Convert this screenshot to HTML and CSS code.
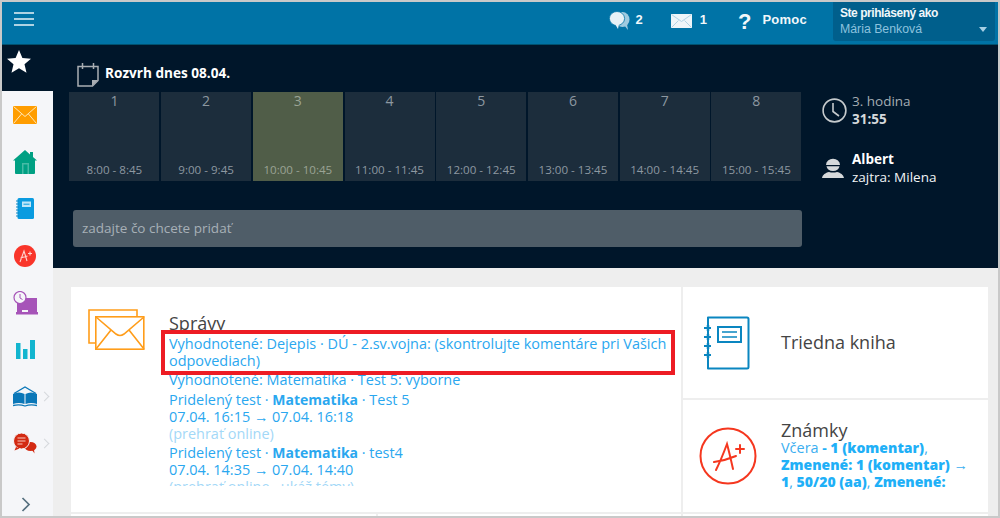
FILE: index.html
```html
<!DOCTYPE html>
<html lang="sk">
<head>
<meta charset="utf-8">
<title>Rozvrh</title>
<link rel="stylesheet" href="styles.css">
</head>
<body>
<div class="frame">
  <header class="topbar">
    <svg class="burger" width="20" height="14" viewBox="0 0 20 14"><path d="M0 1h20M0 7h20M0 13h20" stroke="#e8f3f8" stroke-width="1.6"/></svg>
    <div class="top-items">
      <svg class="ti-chat" width="21" height="20" viewBox="0 0 21 20"><ellipse cx="13.5" cy="8.5" rx="7" ry="7.5" fill="#9fcbe0"/><path d="M15 14l4 5-1-6z" fill="#9fcbe0"/><ellipse cx="8" cy="7.5" rx="7.6" ry="7" fill="#e6f1f6" stroke="#0073a6" stroke-width=".8"/><path d="M6 13l3 5 1-5z" fill="#e6f1f6"/></svg>
      <b class="ti-count c1">2</b>
      <svg class="ti-mail" width="21" height="14" viewBox="0 0 21 14"><rect width="21" height="14" fill="#eef5f9"/><path d="M.5.5l10 7 10-7M.5 13.5l7-7M20.5 13.5l-7-7" stroke="#a8cfe2" fill="none" stroke-width=".9"/></svg>
      <b class="ti-count c2">1</b>
      <span class="ti-help">?</span>
      <b class="ti-pomoc">Pomoc</b>
      <div class="user">
        <b class="user-label">Ste prihlásený ako</b>
        <span class="user-name">Mária Benková</span>
        <i class="caret"></i>
      </div>
    </div>
  </header>
  <div class="layout">
    <aside class="side">
      <div class="side-top">
        <svg width="24" height="23" viewBox="0 0 24 23"><path d="M12 0l3.4 8 8.6.7-6.5 5.6 2 8.4L12 18.2 4.500 22.700l2-8.400L0 8.700 8.600 8z" fill="#fff"/></svg>
      </div>
      <nav class="side-nav">
        <div class="nav-item"><svg width="24" height="18" viewBox="0 0 24 18"><rect width="24" height="18" fill="#ff9d00"/><path d="M.5.500l11.500 10L23.500.500M.5 17.500l8-9.500M23.500 17.500l-8-9.500" stroke="#ffe7b8" stroke-width="1" fill="none"/></svg></div>
        <div class="nav-item"><svg width="24" height="24" viewBox="0 0 24 24"><path d="M12 0L0 10.500h2V23a1 1 0 0 0 1 1h18a1 1 0 0 0 1-1V10.500h2L20 7V2h-3v2.500z" fill="#00a083"/><rect x="9" y="13" width="7" height="11" fill="#47bba6"/><rect x="10.500" y="14.500" width="4" height="9.500" fill="#00a083"/></svg></div>
        <div class="nav-item"><svg width="18" height="21" viewBox="0 0 18 21"><rect x="1.500" width="16.500" height="21" rx="1.500" fill="#0a9be0"/><path d="M0 3h3M0 6h3M0 9h3M0 12h3M0 15h3M0 18h3" stroke="#0a86c4" stroke-width="1"/><rect x="6" y="3.500" width="9" height="5.500" fill="#bfe6f8"/><path d="M7.500 6.200h6" stroke="#0a9be0"/></svg></div>
        <div class="nav-item"><svg width="22" height="22" viewBox="0 0 22 22"><circle cx="11" cy="11" r="11" fill="#f9352a"/><path d="M6 17L10 6l3 10M6.500 13l7-2M14 8.500h4M16 6.500v4" stroke="#ffd5d0" stroke-width="1.100" fill="none"/></svg></div>
        <div class="nav-item"><svg width="25" height="24" viewBox="0 0 25 24"><rect x="4" y="7" width="20" height="14" fill="#a654b8"/><path d="M3 21h22v2.500H3z" fill="#a654b8"/><rect x="9" y="19" width="6" height="2" fill="#f5f6f9"/><circle cx="7" cy="6.500" r="6" fill="#f5f6f9" stroke="#a654b8" stroke-width="1.200"/><path d="M7 3v4l2.500 1.500" stroke="#a654b8" fill="none"/></svg></div>
        <div class="nav-item"><svg width="19" height="19" viewBox="0 0 19 19"><path d="M0 3h4.500v16H0zM7 9h4.500v10H7zM14 0h5v19h-5z" fill="#12b5cf"/></svg></div>
        <div class="nav-item has-more"><svg width="24" height="21" viewBox="0 0 24 21"><path d="M1 7.500L12 1l11 6.500" stroke="#0a77b8" stroke-width="1.300" fill="none"/><path d="M0 8c4-2 8-2 11.500 0v10C8 16.500 4 16.500 0 18zM24 8c-4-2-8-2-11.500 0v10c3.500-1.500 7.500-1.500 11.500 0z" fill="#0a77b8"/><path d="M0 19.500c4-1 8-1 12 .5 4-1.500 8-1.500 12-.5" stroke="#0a77b8" stroke-width="1.300" fill="none"/></svg><i class="more"></i></div>
        <div class="nav-item has-more"><svg width="24" height="21" viewBox="0 0 24 21"><ellipse cx="17.500" cy="13.500" rx="6" ry="4.500" fill="#d32a12"/><path d="M19 17l2.500 3.500-.5-4z" fill="#d32a12"/><circle cx="8.500" cy="8" r="8" fill="#d32a12" stroke="#f5f6f9"/><path d="M3 14l-1.500 3.500 5-2z" fill="#d32a12"/><path d="M4.500 5h8M4.500 8h8M4.500 11h5" stroke="#f9c9c0" stroke-width="1.200"/></svg><i class="more"></i></div>
        <svg class="side-chevron" width="10" height="15" viewBox="0 0 10 15"><path d="M1.500 1l6.500 6.500L1.500 14" stroke="#56707f" stroke-width="1.700" fill="none"/></svg>
      </nav>
    </aside>
    <main class="main">
      <section class="hero">
        <div class="hero-left">
          <div class="today">
            <svg width="22" height="25" viewBox="0 0 22 25"><path d="M1 4.500h20v14l-5.500 5.500H1z" fill="none" stroke="#a9aeb3" stroke-width="1.500"/><path d="M5.500 1v6M16.500 1v6" stroke="#a9aeb3" stroke-width="1.500"/><path d="M15 24v-6h6z" fill="#a9aeb3"/></svg>
            <b>Rozvrh dnes 08.04.</b>
          </div>
          <div class="lessons">
            <div class="lesson"><span class="num">1</span><span class="time">8:00 - 8:45</span></div>
            <div class="lesson"><span class="num">2</span><span class="time">9:00 - 9:45</span></div>
            <div class="lesson current"><span class="num">3</span><span class="time">10:00 - 10:45</span></div>
            <div class="lesson"><span class="num">4</span><span class="time">11:00 - 11:45</span></div>
            <div class="lesson"><span class="num">5</span><span class="time">12:00 - 12:45</span></div>
            <div class="lesson"><span class="num">6</span><span class="time">13:00 - 13:45</span></div>
            <div class="lesson"><span class="num">7</span><span class="time">14:00 - 14:45</span></div>
            <div class="lesson"><span class="num">8</span><span class="time">15:00 - 15:45</span></div>
          </div>
          <div class="add-input">zadajte čo chcete pridať</div>
        </div>
        <div class="hero-right">
          <div class="status">
            <svg width="25" height="25" viewBox="0 0 25 25"><circle cx="12.500" cy="12.500" r="11.400" fill="none" stroke="#c5cacd" stroke-width="1.600"/><path d="M11 5v8.500l6 4.500" fill="none" stroke="#c5cacd" stroke-width="1.600"/></svg>
            <div class="status-text clock"><span>3. hodina</span><b>31:55</b></div>
          </div>
          <div class="status nameday">
            <svg width="22" height="21" viewBox="0 0 22 24" preserveAspectRatio="none"><path d="M4 9a7 7 0 0 1 14 0z" fill="#d6d9db"/><path d="M4.500 10.500h13C17 14 14.500 16 11 16s-6-2-6.500-5.500z" fill="#d6d9db"/><path d="M0 24c.5-4 3.500-6 7-7 2.500 1 5.500 1 8 0 3.500 1 6.500 3 7 7z" fill="#d6d9db"/></svg>
            <div class="status-text name"><b>Albert</b><span>zajtra: Milena</span></div>
          </div>
        </div>
      </section>
      <section class="dash">
        <article class="card card-msg">
          <svg class="card-icon" width="57" height="41" viewBox="0 0 57 41"><path d="M7 34H1V1h48v6" fill="none" stroke="#ff9d1a" stroke-width="1.600"/><rect x="7.800" y="7.800" width="48" height="32.400" fill="#fff" stroke="#ff9d1a" stroke-width="1.600"/><path d="M8 8l20 17q4 3 8 0L56 8M8 40l15-19M56 40L41 21" fill="none" stroke="#ff9d1a" stroke-width="1.600"/></svg>
          <div class="card-body">
            <h2>Správy</h2>
            <div class="feed">
              <p>Vyhodnotené: Dejepis · DÚ - 2.sv.vojna: (skontrolujte komentáre pri Vašich odpovediach)</p>
              <p>Vyhodnotené: Matematika · Test 5: vyborne</p>
              <p>Pridelený test · <b>Matematika</b> · Test 5<br>07.04. 16:15 → 07.04. 16:18<br><span class="soft">(prehrať online)</span></p>
              <p>Pridelený test · <b>Matematika</b> · test4<br>07.04. 14:35 → 07.04. 14:40<br><span class="soft">(prehrať online , ukáž témy)</span></p>
            </div>
          </div>
          <div class="marker"></div>
        </article>
        <article class="card card-book">
          <svg width="46" height="54" viewBox="0 0 46 54"><path d="M4 1.500h39a1.500 1.500 0 0 1 1.500 1.500v48a1.500 1.500 0 0 1-1.500 1.500H4z" fill="none" stroke="#0a86c0" stroke-width="2" stroke-linejoin="round"/><path d="M4 1.500v51" stroke="#0a86c0" stroke-width="2"/><path d="M0 12h7M0 21h7M0 30h7M0 39h7" stroke="#0a86c0" stroke-width="2"/><path d="M4 9v6M4 18v6M4 27v6M4 36v6" stroke="#0a86c0" stroke-width="2.500"/><rect x="14" y="11" width="23" height="15" fill="none" stroke="#0a86c0" stroke-width="2"/><path d="M18 16h15M18 21h15" stroke="#0a86c0" stroke-width="1.600"/></svg>
          <h2>Triedna kniha</h2>
        </article>
        <article class="card card-grade">
          <svg width="58" height="58" viewBox="0 0 58 58"><circle cx="29" cy="29" r="27.500" fill="none" stroke="#f5371f" stroke-width="2"/><path d="M17 43c4-8 8-18 11-26 2 7 4 16 6 25M15 35c7-1 15-3 22-6M37 22h8M41 18v8" fill="none" stroke="#f5371f" stroke-width="2" stroke-linecap="round"/></svg>
          <div class="card-body">
            <h2>Známky</h2>
            <div class="grades"><span class="thin">Včera</span> - <b>1 (komentar)</b><span class="thin">,</span> <b>Zmenené: 1 (komentar)</b> <span class="thin">→</span> <b>1</b><span class="thin">,</span> <b>50/20 (aa)</b><span class="thin">,</span> <b>Zmenené:</b></div>
          </div>
        </article>
        <div class="rest-row">
          <div class="card"></div>
          <div class="card"></div>
        </div>
        <div class="card card-rest"></div>
      </section>
    </main>
  </div>
</div>
</body>
</html>
```
FILE: styles.css
```css
* { box-sizing: border-box; }
html, body { margin: 0; padding: 0; }
body { width: 1000px; height: 518px; overflow: hidden; font-family: "Open Sans", sans-serif; }
h2, p { margin: 0; font-weight: 400; }
svg { flex: none; }

.frame { width: 1000px; height: 518px; border: 2px solid #c9c9c9; display: flex; flex-direction: column; overflow: hidden; background: #eee; }

.topbar { height: 43px; flex: none; background: #0073a6; display: flex; align-items: flex-start; justify-content: space-between; padding-left: 12px; border-bottom: 1px solid #00516f; }
.burger { margin-top: 10px; }
.top-items { display: flex; align-items: flex-start; color: #f1f7fa; font-family: "Liberation Sans", sans-serif; }
.ti-chat { margin-top: 9px; }
.ti-count { font-size: 13px; line-height: 15px; margin-top: 10px; }
.c1 { margin-left: 5px; }
.ti-mail { margin: 12px 0 0 28px; }
.c2 { margin-left: 8px; }
.ti-help { font-size: 22px; font-weight: 700; line-height: 24px; margin: 8px 0 0 31px; }
.ti-pomoc { font-size: 13px; line-height: 15px; margin: 10px 0 0 11px; letter-spacing: .25px; }
.user { width: 162px; height: 39px; margin-left: 26px; margin-right: 3px; background: #005f8c; border-radius: 0 0 3px 3px; padding: 3px 7px; position: relative; line-height: 16px; display: flex; flex-direction: column; }
.user-label { font-size: 12px; letter-spacing: -.45px; }
.user-name { color: #8cc2de; font-size: 12.300px; }
.caret { position: absolute; right: 8px; bottom: 9px; border: 4px solid transparent; border-top: 5px solid #a5cfe4; border-bottom: 0; }

.layout { flex: 1; display: flex; min-height: 0; }
.side { width: 51px; flex: none; display: flex; flex-direction: column; background: #00162a; }
.side-top { height: 46px; flex: none; padding: 5px 0 0 5px; }
.side-nav { flex: 1; background: #f5f6f9; display: flex; flex-direction: column; position: relative; }
.nav-item { height: 47px; flex: none; display: flex; align-items: center; justify-content: center; padding-right: 5px; position: relative; }
.more { position: absolute; right: 5px; top: 50%; width: 7px; height: 7px; margin-top: -4px; border-top: 1px solid #d5d8dc; border-right: 1px solid #d5d8dc; transform: rotate(45deg); }
.side-chevron { position: absolute; left: 19px; bottom: 4px; }

.main { flex: 1; min-width: 0; display: flex; flex-direction: column; }
.hero { height: 223px; flex: none; background: #00162a; display: flex; padding-left: 16px; }
.hero-left { width: 733px; flex: none; }
.today { height: 47px; padding: 17px 0 0 8px; display: flex; align-items: flex-start; color: #fff; font-size: 13.600px; }
.today b { margin: 2px 0 0 6px; line-height: 18px; }
.lessons { display: grid; grid-template-columns: repeat(8, 1fr); gap: 1.700px; height: 89px; width: 732px; margin-left: .4px; }
.lesson { background: #1c2d3c; display: flex; flex-direction: column; justify-content: space-between; align-items: center; color: #8d98a1; padding: 0 0 3px; }
.lesson.current { background: #505d48; color: #9aa394; }
.num { font-size: 14px; line-height: 18px; }
.time { font-size: 11.600px; line-height: 16px; }
.add-input { margin: 29px 0 0 4px; width: 729px; height: 37px; background: #4f5d68; border-radius: 3px; color: #a7b0b7; font-size: 13.500px; line-height: 37px; padding-left: 9px; }

.hero-right { padding: 53px 0 0 20px; }
.status { display: flex; align-items: flex-start; }
.status-text { display: flex; flex-direction: column; margin-left: 5px; font-size: 13.500px; line-height: 18px; }
.clock { color: #a5adb3; margin-top: -6px; }
.clock b { color: #d5d9dc; }
.nameday { margin-top: 29px; }
.name { color: #f1f4f6; margin-left: 8px; margin-top: -7px; }
.name b { color: #fff; }

.dash { flex: 1; min-height: 0; padding: 19px 10px 0 18px; display: grid; grid-template-columns: 610px 305px; grid-template-rows: 111px 112px 4px; column-gap: 2px; row-gap: 2px; }
.card { background: #fff; display: flex; }
.card-msg { grid-row: 1 / span 2; grid-column: 1; position: relative; padding: 22px 0 0 17px; }
.card-body { min-width: 0; display: flex; flex-direction: column; }
.card-msg .card-body { margin-left: 24px; margin-top: 4px; flex: 1; padding-right: 12px; }
.card h2 { font-size: 18px; line-height: 20px; color: #444; }
.feed { height: 151px; overflow: hidden; color: #2aa7ef; font-size: 14.450px; line-height: 17px; margin-top: 2px; }
.feed p { margin-bottom: 2.400px; }
.feed b { font-weight: 700; font-size: 14px; }
.soft { color: #a3d8f7; }
.marker { position: absolute; left: 90px; top: 43px; width: 514px; height: 45px; border: 4px solid #ed1c24; }

.card-book { grid-column: 2; grid-row: 1; align-items: center; padding-left: 21px; }
.card-book h2 { margin: -1px 0 0 31px; }
.card-grade { grid-column: 2; grid-row: 2; align-items: center; padding-left: 16px; }
.card-grade .card-body { margin-left: 24px; width: 190px; flex: none; margin-top: -2px; }
.grades { color: #1fb0f7; font-size: 14px; line-height: 17px; font-weight: 700; margin-top: -1px; }
.grades .thin { font-weight: 400; color: #3aaef0; font-size: 14.450px; }
.rest-row { grid-row: 3; grid-column: 1; display: grid; grid-template-columns: 305px 1fr; gap: 2px; }
.card-rest { grid-row: 3; grid-column: 2; }
```
